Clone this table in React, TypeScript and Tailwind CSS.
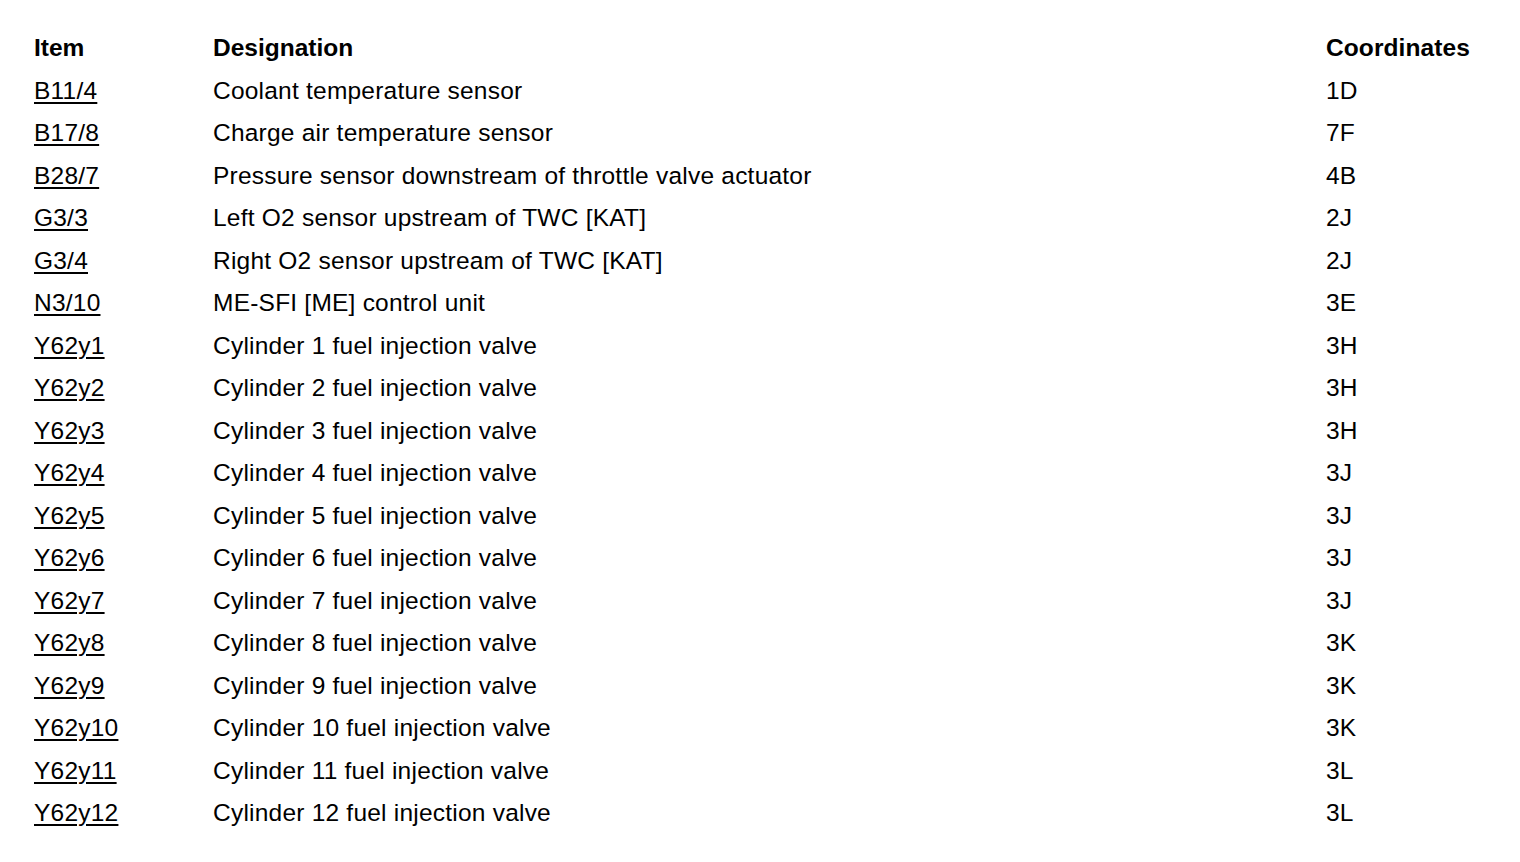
const rows: [string, string, string][] = [
  ["B11/4", "Coolant temperature sensor", "1D"],
  ["B17/8", "Charge air temperature sensor", "7F"],
  ["B28/7", "Pressure sensor downstream of throttle valve actuator", "4B"],
  ["G3/3", "Left O2 sensor upstream of TWC [KAT]", "2J"],
  ["G3/4", "Right O2 sensor upstream of TWC [KAT]", "2J"],
  ["N3/10", "ME-SFI [ME] control unit", "3E"],
  ["Y62y1", "Cylinder 1 fuel injection valve", "3H"],
  ["Y62y2", "Cylinder 2 fuel injection valve", "3H"],
  ["Y62y3", "Cylinder 3 fuel injection valve", "3H"],
  ["Y62y4", "Cylinder 4 fuel injection valve", "3J"],
  ["Y62y5", "Cylinder 5 fuel injection valve", "3J"],
  ["Y62y6", "Cylinder 6 fuel injection valve", "3J"],
  ["Y62y7", "Cylinder 7 fuel injection valve", "3J"],
  ["Y62y8", "Cylinder 8 fuel injection valve", "3K"],
  ["Y62y9", "Cylinder 9 fuel injection valve", "3K"],
  ["Y62y10", "Cylinder 10 fuel injection valve", "3K"],
  ["Y62y11", "Cylinder 11 fuel injection valve", "3L"],
  ["Y62y12", "Cylinder 12 fuel injection valve", "3L"],
];

export default function App() {
  return (
    <div className="min-h-[862px] w-[1520px] bg-white pl-[34px] pt-[27px] font-['Liberation_Sans',Arial,sans-serif] text-[24.5px] text-black">
      <div className="grid grid-cols-[179px_1113px_1fr] auto-rows-[42.5px] items-center leading-none">
        <div className="font-bold">Item</div>
        <div className="font-bold">Designation</div>
        <div className="font-bold tracking-[0.1px]">Coordinates</div>
        {rows.map(([item, name, coord]) => (
          <div key={item} className="contents tracking-[0.22px]">
            <div>
              <a href="#" className="underline decoration-2 underline-offset-[3px]">
                {item}
              </a>
            </div>
            <div>{name}</div>
            <div>{coord}</div>
          </div>
        ))}
      </div>
    </div>
  );
}
